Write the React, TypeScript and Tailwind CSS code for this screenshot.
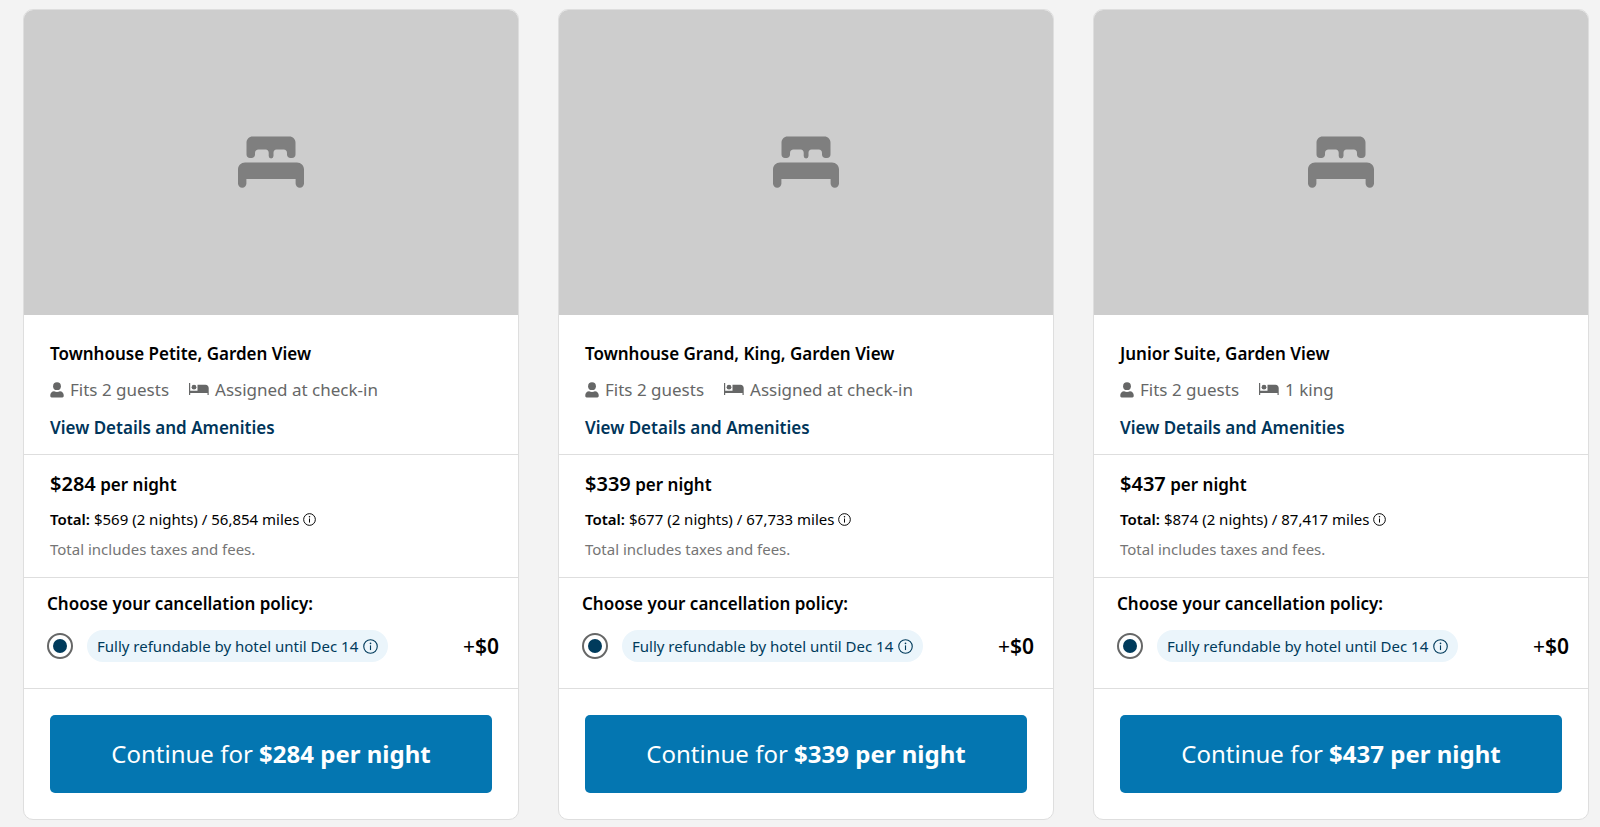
import React from "react";

interface Room {
  id: string;
  name: string;
  beds: string;
  nightly: string;
  total: string;
  miles: string;
}

const rooms: Room[] = [
  {
    id: "townhouse-petite",
    name: "Townhouse Petite, Garden View",
    beds: "Assigned at check-in",
    nightly: "$284",
    total: "$569",
    miles: "56,854",
  },
  {
    id: "townhouse-grand",
    name: "Townhouse Grand, King, Garden View",
    beds: "Assigned at check-in",
    nightly: "$339",
    total: "$677",
    miles: "67,733",
  },
  {
    id: "junior-suite",
    name: "Junior Suite, Garden View",
    beds: "1 king",
    nightly: "$437",
    total: "$874",
    miles: "87,417",
  },
];

function BedPlaceholderIcon() {
  return (
    <svg
      viewBox="0 0 66 52"
      className="h-[52px] w-[66px] fill-[#7f7f7f]"
      aria-hidden="true"
    >
      <path d="M14.500 0.500h37c3.300 0 6 2.700 6 6v12c0 2-1.500 3.500-3.500 3.500h-1.500c-2 0-3.500-1.500-3.500-3.500V17c0-2-1.200-3.500-3.300-3.500h-7.200c-1.900 0-3 1.300-3 3.200V20a2.400 2.400 0 0 1-4.800 0v-3.300c0-1.900-1.100-3.200-3-3.200h-7.200c-2.100 0-3.500 1.500-3.500 3.500v1.500c0 2-1.500 3.500-3.500 3.500h-1.500c-2 0-3.500-1.500-3.500-3.500v-12c0-3.300 2.700-6 6-6z" />
      <path d="M7 26.500h52c3.900 0 7 3.100 7 7v14a4.200 4.200 0 0 1-8.400 0V43H8.400v4.500a4.200 4.200 0 0 1-8.400 0v-14c0-3.900 3.100-7 7-7z" />
    </svg>
  );
}

function GuestIcon() {
  return (
    <svg
      viewBox="0 0 14 16"
      className="h-4 w-[14px] fill-[#666767]"
      aria-hidden="true"
    >
      <circle cx="7" cy="4.200" r="3.900" />
      <path d="M4.100 9.200c.9.500 1.800.7 2.900.7s2-.2 2.900-.7c2.200.1 3.800 1.700 3.800 3.900v1c0 .8-.5 1.300-1.300 1.300H1.600c-.8 0-1.300-.5-1.300-1.300v-1c0-2.200 1.600-3.800 3.800-3.900z" />
    </svg>
  );
}

function BedIcon() {
  return (
    <svg
      viewBox="0 0 20 14"
      className="h-[14px] w-5 fill-[#666767]"
      aria-hidden="true"
    >
      <path d="M0 0h1.200v7.800h7.300V1.800H16.500c1.900 0 3.200 1.300 3.200 3.200v7h-1.200v-2H1.200v2H0z" />
      <circle cx="5" cy="4.200" r="2.400" />
    </svg>
  );
}

function InfoIcon({ className }: { className: string }) {
  return (
    <svg
      viewBox="0 0 16 16"
      className={className}
      fill="none"
      stroke="currentColor"
      aria-hidden="true"
    >
      <circle cx="8" cy="8" r="7.200" strokeWidth="1.200" />
      <path d="M8 6.800v5" strokeWidth="1.200" />
      <circle cx="8" cy="4.600" r="0.900" fill="currentColor" stroke="none" />
    </svg>
  );
}

function RoomCard({ room }: { room: Room }) {
  return (
    <article className="flex-1 overflow-hidden rounded-[10px] border border-[#dedede] bg-white">
      <div className="flex h-[305px] items-center justify-center bg-[#cdcdcd] pb-[2px]">
        <BedPlaceholderIcon />
      </div>

      <div className="border-b border-[#dedede] px-[26px] pt-[25px] pb-3">
        <h2 className="text-[17px] leading-7 font-semibold">{room.name}</h2>
        <div className="mt-2 flex items-center gap-5 text-[17px] leading-7 text-[#666767]">
          <span className="flex items-center gap-[6px]">
            <GuestIcon />
            Fits 2 guests
          </span>
          <span className="flex items-center gap-[6px]">
            <BedIcon />
            {room.beds}
          </span>
        </div>
        <a
          href="#details"
          className="mt-[10px] block text-[17px] leading-7 font-semibold text-[#00355a]"
        >
          View Details and Amenities
        </a>
      </div>

      <div className="border-b border-[#dedede] px-[26px] pt-4 pb-[14px]">
        <p className="text-[17px] leading-7 font-semibold">
          <span className="text-xl leading-none">{room.nightly}</span> per night
        </p>
        <div className="mt-[6px] flex items-center gap-1 text-[15px] leading-7">
          <p>
            <span className="font-semibold">Total:</span> {room.total} (2
            nights) / {room.miles} miles
          </p>
          <button type="button" aria-label="About the total">
            <InfoIcon className="h-[13px] w-[13px]" />
          </button>
        </div>
        <p className="mt-[2px] text-[15px] leading-7 text-[#757575]">
          Total includes taxes and fees.
        </p>
      </div>

      <fieldset className="border-b border-[#dedede] pt-3 pr-[19px] pb-[26px] pl-[23px]">
        <legend className="float-left w-full text-[17px] leading-7 font-semibold">
          Choose your cancellation policy:
        </legend>
        <div className="clear-both flex items-center pt-3">
          <input
            type="radio"
            id={`${room.id}-refundable`}
            name={`${room.id}-policy`}
            defaultChecked
            className="h-[26px] w-[26px] appearance-none rounded-full border-2 border-[#666767] p-1 checked:bg-[#003b5c] checked:bg-clip-content"
          />
          <label
            htmlFor={`${room.id}-refundable`}
            className="ml-[14px] flex h-8 items-center gap-[5px] rounded-full bg-[#ebf5fb] px-[10px] text-[15px] text-[#003b5c]"
          >
            Fully refundable by hotel until Dec 14
            <InfoIcon className="h-[15px] w-[15px]" />
          </label>
          <span className="ml-auto text-[21px] leading-7 font-semibold">
            <span className="font-normal">+</span>$0
          </span>
        </div>
      </fieldset>

      <div className="p-[26px]">
        <button
          type="button"
          className="h-[78px] w-full rounded-[5px] bg-[#0476b1] text-2xl text-white"
        >
          Continue for{" "}
          <span className="font-bold">{room.nightly} per night</span>
        </button>
      </div>
    </article>
  );
}

export default function App() {
  return (
    <main className="flex min-h-screen items-start gap-[39px] bg-[#f3f3f3] pt-[9px] pr-[11px] pb-2 pl-[23px] font-['Noto_Sans',sans-serif] text-black">
      {rooms.map((room) => (
        <RoomCard key={room.id} room={room} />
      ))}
    </main>
  );
}
